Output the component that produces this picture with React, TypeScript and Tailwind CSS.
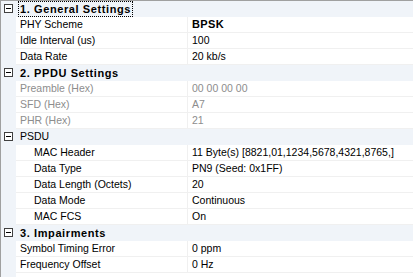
type Row =
  | { kind: "cat"; label: string; bold?: boolean; focus?: boolean }
  | { kind: "prop"; name: string; value: string; indent?: boolean; dim?: boolean; valueBold?: boolean };

const rows: Row[] = [
  { kind: "cat", label: "1. General Settings", bold: true, focus: true },
  { kind: "prop", name: "PHY Scheme", value: "BPSK", valueBold: true },
  { kind: "prop", name: "Idle Interval (us)", value: "100" },
  { kind: "prop", name: "Data Rate", value: "20 kb/s" },
  { kind: "cat", label: "2. PPDU Settings", bold: true },
  { kind: "prop", name: "Preamble (Hex)", value: "00 00 00 00", dim: true },
  { kind: "prop", name: "SFD (Hex)", value: "A7", dim: true },
  { kind: "prop", name: "PHR (Hex)", value: "21", dim: true },
  { kind: "cat", label: "PSDU" },
  { kind: "prop", name: "MAC Header", value: "11 Byte(s) [8821,01,1234,5678,4321,8765,]", indent: true },
  { kind: "prop", name: "Data Type", value: "PN9 (Seed: 0x1FF)", indent: true },
  { kind: "prop", name: "Data Length (Octets)", value: "20", indent: true },
  { kind: "prop", name: "Data Mode", value: "Continuous", indent: true },
  { kind: "prop", name: "MAC FCS", value: "On", indent: true },
  { kind: "cat", label: "3. Impairments", bold: true },
  { kind: "prop", name: "Symbol Timing Error", value: "0 ppm" },
  { kind: "prop", name: "Frequency Offset", value: "0 Hz" },
];

function MinusBox() {
  return (
    <div className="mt-[3px] ml-[3px] flex h-[9px] w-[9px] items-center justify-center border border-[#404040] bg-white">
      <div className="h-px w-[5px] bg-black" />
    </div>
  );
}

export default function App() {
  return (
    <div
      className="flex h-[277px] w-[413px] flex-col overflow-hidden border-t border-l border-[#a0a0a0] bg-white text-[10.5px] text-black"
      style={{ fontFamily: '"Liberation Sans", Arial, sans-serif' }}
    >
      {rows.map((r, i) =>
        r.kind === "cat" ? (
          <div key={i} className="flex h-4 shrink-0 bg-[#f0f4f9]">
            <div className="w-[15px] shrink-0">
              <MinusBox />
            </div>
            <div className="flex items-stretch pl-[2px]">
              <span
                className={`flex items-center px-[1px] ${r.bold ? "font-bold tracking-[0.6px] text-[11px]" : ""} ${
                  r.focus ? "border border-dotted border-black" : "border border-transparent"
                }`}
              >
                {r.label}
              </span>
            </div>
          </div>
        ) : (
          <div key={i} className="flex h-4 shrink-0">
            <div className="w-[15px] shrink-0 bg-[#f0f4f9]" />
            <div
              className={`flex w-[172px] shrink-0 items-center border-r border-b border-[#f0f0f0] ${
                r.indent ? "pl-[18px]" : "pl-[4px]"
              } ${r.dim ? "text-[#8d8d8d]" : ""}`}
            >
              {r.name}
            </div>
            <div
              className={`flex flex-1 items-center border-b border-[#f0f0f0] pl-[4px] whitespace-nowrap ${
                r.dim ? "text-[#8d8d8d]" : ""
              } ${r.valueBold ? "font-bold text-[11px] tracking-[0.4px]" : ""}`}
            >
              {r.value}
            </div>
          </div>
        )
      )}
      <div className="flex flex-1">
        <div className="w-[15px] shrink-0 bg-[#f0f4f9]" />
      </div>
    </div>
  );
}
